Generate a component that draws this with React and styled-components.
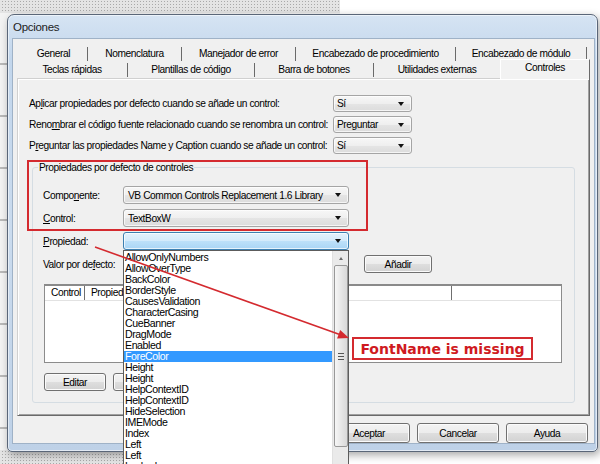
import React from 'react'
import styled, { createGlobalStyle } from 'styled-components'

const UI_FONT = `"Liberation Sans", Arial, sans-serif`
const RED = '#d42a2f'

const GlobalStyle = createGlobalStyle`
  html, body {
    margin: 0;
    padding: 0;
    background: #fff;
  }
  body {
    width: 600px;
    height: 464px;
    overflow: hidden;
    font-family: ${UI_FONT};
    font-size: 10.2px;
    letter-spacing: -0.42px;
    color: #000;
  }
  * {
    box-sizing: border-box;
  }
`

const Screen = styled.div`
  position: relative;
  width: 600px;
  height: 464px;
  overflow: hidden;
  background: #fff;
`

// window lying behind the dialog
const BackWindow = styled.div`
  position: absolute;
  left: -20px;
  top: 0;
  width: 360px;
  height: 464px;
  display: flex;
  flex-direction: column;
  background: #ececec;
`

const DottedBar = styled.div`
  height: ${p => p.$h}px;
  flex: none;
  background-color: #e4e4e4;
  background-image: radial-gradient(#a9a9a9 0.7px, transparent 1px);
  background-size: 3px 3px;
`

const BackRows = styled.div`
  flex: 1;
  background: repeating-linear-gradient(
    to bottom,
    #f3f3f3 0,
    #f3f3f3 50px,
    #b9b9b9 50px,
    #b9b9b9 52px
  );
`

const Dialog = styled.div`
  position: absolute;
  left: 7px;
  top: 14px;
  width: 591px;
  height: 438px;
  display: flex;
  flex-direction: column;
  padding: 0 3px 8px 5px;
  border: 1px solid #5a6678;
  border-radius: 7px 7px 5px 5px;
  background: linear-gradient(180deg, #d6e4f3 0%, #c2d6ec 10%, #cadbee 50%, #bed1e7 100%);
  box-shadow: inset 0 0 0 1px rgba(255, 255, 255, 0.55), 2px 3px 9px rgba(0, 0, 0, 0.35);
`

const TitleBar = styled.div`
  height: 24px;
  flex: none;
  line-height: 25px;
  font-size: 11.5px;
  letter-spacing: -0.3px;
  color: #1c1c1c;
`

const Client = styled.div`
  flex: 1;
  display: flex;
  flex-direction: column;
  padding: 7px 4px 0 4px;
  background: #f0f0f0;
  box-shadow: 0 0 0 1px #9fb2c7;
`

const TabRow = styled.div`
  display: flex;
  height: 16px;
  padding-left: ${p => p.$inset || 0}px;
`

const Tab = styled.div`
  flex: none;
  width: ${p => p.$w}px;
  height: 14px;
  margin-top: 1px;
  line-height: 14px;
  text-align: center;
  white-space: nowrap;
  border-right: ${p => (p.$noSep ? 'none' : '1px solid #6a6a6a')};
`

const ActiveTab = styled.div`
  position: relative;
  z-index: 1;
  flex: none;
  width: ${p => p.$w}px;
  height: 20px;
  margin-top: -3px;
  line-height: 15px;
  text-align: center;
  background: #f2f2f2;
  border-top: 1px solid #fff;
  border-left: 1px solid #fff;
  border-right: 1px solid #6a6a6a;
`

const Panel = styled.div`
  flex: 1;
  display: flex;
  flex-direction: column;
  padding: 16px 11px 0 11px;
  border: 1px solid;
  border-color: #d0d0d0 #6a6a6a #6a6a6a #d0d0d0;
  box-shadow: inset 1px 1px 0 #fff, inset -1px -1px 0 #a0a0a0;
`

const OptionGrid = styled.div`
  display: grid;
  grid-template-columns: 304px 79px;
  grid-auto-rows: 17px;
  row-gap: 4px;
  align-items: center;
`

const Label = styled.span`
  white-space: nowrap;
  line-height: 13px;
`

const Combo = styled.div`
  position: relative;
  display: flex;
  align-items: center;
  width: ${p => p.$w}px;
  height: ${p => p.$h || 18}px;
  padding-left: ${p => p.$pad || 4}px;
  border: 1px solid ${p => (p.$focused ? '#3c7fb1' : '#a5a5a5')};
  border-radius: 3px;
  white-space: nowrap;
  background: ${p =>
    p.$focused
      ? 'linear-gradient(#e3f1fc 0%, #d2eafb 50%, #bde0f9 51%, #a9d5f5 100%)'
      : 'linear-gradient(#f7f7f7 0%, #efefef 50%, #e5e5e5 51%, #dcdcdc 100%)'};
  box-shadow: inset 0 0 0 1px rgba(255, 255, 255, 0.7);
`

const ComboArrow = styled.span`
  margin-left: auto;
  margin-right: 7px;
  width: 0;
  height: 0;
  border-left: 3.5px solid transparent;
  border-right: 3.5px solid transparent;
  border-top: 4px solid #111;
`

const GroupBox = styled.div`
  position: relative;
  flex: 1;
  display: flex;
  flex-direction: column;
  margin: 13px 3px 12px 3px;
  padding: 18px 10px 0 10px;
  border: 1px solid #d5dde3;
  border-radius: 3px;
`

const GroupCaption = styled.span`
  position: absolute;
  top: -7px;
  left: 5px;
  padding: 0 1px;
  line-height: 13px;
  background: #f0f0f0;
  white-space: nowrap;
`

const FieldGrid = styled.div`
  display: grid;
  grid-template-columns: 80px 226px 15px 68px;
  grid-auto-rows: 18px;
  row-gap: 5px;
  align-items: center;
`

const ComboWrap = styled.div`
  position: relative;
  height: 18px;
`

const TextBox = styled.div`
  width: 226px;
  height: 18px;
  background: #fff;
  border: 1px solid #abadb3;
`

const Button = styled.div`
  flex: none;
  display: flex;
  align-items: center;
  justify-content: center;
  width: ${p => p.$w}px;
  height: ${p => p.$h || 18}px;
  border: 1px solid #707070;
  border-radius: 3px;
  background: linear-gradient(#f3f3f3 0%, #ececec 50%, #dedede 51%, #d2d2d2 100%);
  box-shadow: inset 0 0 0 1px #fbfbfb;
  white-space: nowrap;
`

const ListView = styled.div`
  width: 518px;
  height: 79px;
  margin: 11px 0 0 1px;
  background: #fff;
  border: 1px solid #8c8c8c;
  border-top: 2px solid #8a8a8a;
`

const ListHeader = styled.div`
  display: flex;
  height: 15px;
  border-bottom: 1px solid #e2e2e2;
`

const HeaderCell = styled.div`
  flex: none;
  width: ${p => p.$w}px;
  padding-left: 6px;
  line-height: 14px;
  white-space: nowrap;
  overflow: hidden;
  border-right: 1px solid #6f6f6f;
`

const ButtonRow = styled.div`
  display: flex;
  gap: 7px;
  margin: 10px 0 0 1px;
`

const DialogButtons = styled.div`
  display: flex;
  justify-content: flex-end;
  gap: 7px;
  margin-top: 7px;
  padding-right: 2px;
`

const DropList = styled.div`
  position: absolute;
  top: 100%;
  left: 0;
  z-index: 5;
  display: flex;
  width: 226px;
  height: 232px;
  background: #fff;
  border: 1px solid #5c5c5c;
`

const DropItems = styled.div`
  flex: 1;
  padding-top: 1px;
  overflow: hidden;
`

const DropItem = styled.div`
  height: 11px;
  padding-left: 1px;
  line-height: 11px;
  font-size: 10.6px;
  white-space: nowrap;
  background: ${p => (p.$selected ? '#3399ff' : 'transparent')};
  color: ${p => (p.$selected ? '#fff' : '#000')};
`

const ScrollBar = styled.div`
  flex: none;
  width: 16px;
  display: flex;
  flex-direction: column;
  align-items: center;
  background: #eaeaea;
  border-left: 1px solid #e0e0e0;
`

const ScrollUp = styled.div`
  flex: none;
  height: 14px;
  display: flex;
  align-items: center;
  justify-content: center;
  &::before {
    content: '';
    width: 0;
    height: 0;
    border-left: 2.5px solid transparent;
    border-right: 2.5px solid transparent;
    border-bottom: 3px solid #6a6a6a;
  }
`

const Thumb = styled.div`
  flex: none;
  width: 14px;
  height: 182px;
  display: flex;
  align-items: center;
  justify-content: center;
  border: 1px solid #989898;
  border-radius: 2px;
  background: linear-gradient(to right, #f6f6f6, #e4e4e4 60%, #d9d9d9);
`

const Grip = styled.div`
  width: 6px;
  height: 7px;
  background: repeating-linear-gradient(to bottom, #555 0, #555 1px, transparent 1px, transparent 3px);
`

const RedFrame = styled.div`
  position: absolute;
  left: 27px;
  top: 160px;
  width: 341px;
  height: 71px;
  border: 2px solid ${RED};
  pointer-events: none;
`

const Callout = styled.div`
  position: absolute;
  left: 352px;
  top: 337px;
  width: 181px;
  height: 23px;
  display: flex;
  align-items: center;
  justify-content: center;
  background: #fff;
  border: 2px solid ${RED};
  color: #cf1a21;
  font-family: "DejaVu Sans", Verdana, sans-serif;
  font-weight: bold;
  font-size: 14px;
  letter-spacing: 0;
  white-space: nowrap;
`

const ArrowLayer = styled.svg`
  position: absolute;
  left: 0;
  top: 0;
  z-index: 10;
  pointer-events: none;
`

const row1 = [
  ['General', 68],
  ['Nomenclatura', 94],
  ['Manejador de error', 114],
  ['Encabezado de procedimiento', 160],
  ['Encabezado de módulo', 131],
]

const row2 = [
  ['Teclas rápidas', 111],
  ['Plantillas de código', 127],
  ['Barra de botones', 119],
  ['Utilidades externas', 126],
]

const properties = [
  'AllowOnlyNumbers',
  'AllowOverType',
  'BackColor',
  'BorderStyle',
  'CausesValidation',
  'CharacterCasing',
  'CueBanner',
  'DragMode',
  'Enabled',
  'ForeColor',
  'Height',
  'Height',
  'HelpContextID',
  'HelpContextID',
  'HideSelection',
  'IMEMode',
  'Index',
  'Left',
  'Left',
  'Locked',
]

function PropertyList() {
  return (
    <DropList>
      <DropItems>
        {properties.map((p, i) => (
          <DropItem key={i} $selected={p === 'ForeColor'}>
            {p}
          </DropItem>
        ))}
      </DropItems>
      <ScrollBar>
        <ScrollUp />
        <Thumb>
          <Grip />
        </Thumb>
      </ScrollBar>
    </DropList>
  )
}

export default function App() {
  return (
    <Screen>
      <GlobalStyle />
      <BackWindow>
        <DottedBar $h={13} />
        <BackRows />
        <DottedBar $h={14} />
      </BackWindow>

      <Dialog>
        <TitleBar>Opciones</TitleBar>
        <Client>
          <TabRow $inset={3}>
            {row1.map(([t, w]) => (
              <Tab key={t} $w={w}>{t}</Tab>
            ))}
          </TabRow>
          <TabRow>
            {row2.map(([t, w], i) => (
              <Tab key={t} $w={w} $noSep={i === row2.length - 1}>{t}</Tab>
            ))}
            <ActiveTab $w={90}>Controles</ActiveTab>
          </TabRow>

          <Panel>
            <OptionGrid>
              <Label>Ap<u>l</u>icar propiedades por defecto cuando se añade un control:</Label>
              <Combo $w={79} $h={17} $pad={3}>Sí<ComboArrow /></Combo>
              <Label>Reno<u>m</u>brar el código fuente relacionado cuando se renombra un control:</Label>
              <Combo $w={79} $h={17} $pad={3}>Preguntar<ComboArrow /></Combo>
              <Label>P<u>r</u>eguntar las propiedades Name y Caption cuando se añade un control:</Label>
              <Combo $w={79} $h={17} $pad={3}>Sí<ComboArrow /></Combo>
            </OptionGrid>

            <GroupBox>
              <GroupCaption>Propiedades por defecto de controles</GroupCaption>
              <FieldGrid>
                <Label>Compo<u>n</u>ente:</Label>
                <Combo $w={226}>VB Common Controls Replacement 1.6 Library<ComboArrow /></Combo>
                <span />
                <span />
                <Label><u>C</u>ontrol:</Label>
                <Combo $w={226}>TextBoxW<ComboArrow /></Combo>
                <span />
                <span />
                <Label><u>P</u>ropiedad:</Label>
                <ComboWrap>
                  <Combo $w={226} $focused><ComboArrow /></Combo>
                  <PropertyList />
                </ComboWrap>
                <span />
                <span />
                <Label>Valor por de<u>f</u>ecto:</Label>
                <TextBox />
                <span />
                <Button $w={68}>Añadir</Button>
              </FieldGrid>

              <ListView>
                <ListHeader>
                  <HeaderCell $w={40}>Control</HeaderCell>
                  <HeaderCell $w={140}>Propiedad</HeaderCell>
                  <HeaderCell $w={227} />
                </ListHeader>
              </ListView>

              <ButtonRow>
                <Button $w={62}>Editar</Button>
                <Button $w={62} />
              </ButtonRow>
            </GroupBox>
          </Panel>

          <DialogButtons>
            <Button $w={82} $h={20}>Aceptar</Button>
            <Button $w={82} $h={20}>Cancelar</Button>
            <Button $w={82} $h={20}>Ayuda</Button>
          </DialogButtons>
        </Client>
      </Dialog>

      <RedFrame />
      <ArrowLayer width="600" height="464" viewBox="0 0 600 464">
        <line x1="95" y1="247" x2="339" y2="334.3" stroke={RED} strokeWidth="1.6" />
        <polygon points="349,338 340.2,330 337.1,338.5" fill={RED} />
      </ArrowLayer>
      <Callout>FontName is missing</Callout>
    </Screen>
  )
}
